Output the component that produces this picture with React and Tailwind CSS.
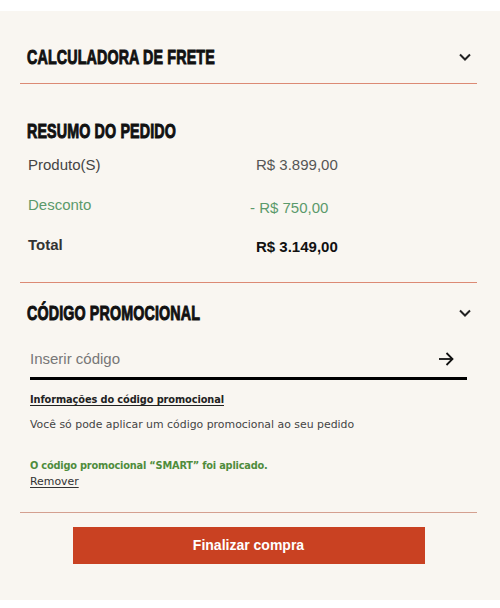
const heading = "inline-block origin-left scale-x-[0.68] font-['Liberation_Sans',Arial,sans-serif] font-bold text-[21px] leading-[21px] tracking-[0.2px] text-[#111] [-webkit-text-stroke:1px_#111]";

function Chevron() {
  return (
    <svg width="12" height="8" viewBox="0 0 12 8" fill="none" className="shrink-0">
      <polyline points="1,1.5 6,6.5 11,1.5" stroke="#222" strokeWidth="2" />
    </svg>
  );
}

function Arrow() {
  return (
    <svg width="16" height="14" viewBox="0 0 16 14" fill="none" className="shrink-0">
      <line x1="1" y1="7" x2="14.5" y2="7" stroke="#111" strokeWidth="1.8" />
      <polyline points="8.5,1 14.5,7 8.5,13" stroke="#111" strokeWidth="1.8" />
    </svg>
  );
}

const rows = [
  { label: "Produto(S)", value: "R$ 3.899,00", labelCls: "text-[#444]", valueCls: "text-[#555]" },
  { label: "Desconto", value: "- R$ 750,00", labelCls: "text-[#5b9a6b]", valueCls: "text-[#5b9a6b] -ml-[6px] mt-[3px]" },
  { label: "Total", value: "R$ 3.149,00", labelCls: "text-[#333] font-bold", valueCls: "text-[#111] font-bold mt-[2px]" },
];

export default function App() {
  return (
    <div className="bg-white min-h-[608px] pt-[11px] font-['Liberation_Sans',Arial,sans-serif]">
      <div className="bg-[#f9f6f1] h-[589px] pl-5 pr-[23px]">
        {/* calculadora */}
        <div className="pt-[35px] pb-[16px] border-b border-[#dc8a74] flex items-center justify-between pl-[7px] pr-[6px]">
          <span className={heading}>CALCULADORA DE FRETE</span>
          <Chevron />
        </div>

        {/* resumo */}
        <div className="pt-[36px] pb-[27px] border-b border-[#dc8a74] pl-[7px]">
          <div className="h-[21px]">
            <span className={heading}>RESUMO DO PEDIDO</span>
          </div>
          <div className="mt-[14px] flex flex-col gap-5">
            {rows.map((r) => (
              <div key={r.label} className="grid grid-cols-[229px_1fr] h-5 text-[15px] leading-5">
                <span className={"pl-[1px] " + r.labelCls}>{r.label}</span>
                <span className={r.valueCls}>{r.value}</span>
              </div>
            ))}
          </div>
        </div>

        {/* codigo */}
        <div className="pt-[19px] pb-[22px] border-b border-[#d4a090]">
          <div className="flex items-center justify-between pl-[7px] pr-[6px]">
            <span className={heading}>CÓDIGO PROMOCIONAL</span>
            <Chevron />
          </div>
          <div className="mt-[26px] mx-[10px] pb-[8px] pr-[13px] border-b-[3px] border-black flex items-center">
            <input
              placeholder="Inserir código"
              className="flex-1 h-5 leading-5 text-[15px] bg-transparent outline-none text-[#222] placeholder:text-[#777]"
            />
            <Arrow />
          </div>
          <div className="ml-[10px] font-['DejaVu_Sans',sans-serif] text-[10.9px] leading-4">
            <p className="mt-[12px] font-bold text-[9.8px] tracking-[-0.1px] text-[#222] underline underline-offset-2">Informações do código promocional</p>
            <p className="mt-[9px] text-[#444]">Você só pode aplicar um código promocional ao seu pedido</p>
            <p className="mt-[25px] font-bold text-[9.8px] tracking-[-0.2px] text-[#4f8c3c]">O código promocional “SMART” foi aplicado.</p>
            <p className="text-[#333] underline underline-offset-2">Remover</p>
          </div>
        </div>

        <button className="block mx-auto mt-[14px] w-[352px] h-[37px] bg-[#c94122] text-white text-[14px] font-bold">
          Finalizar compra
        </button>
      </div>
    </div>
  );
}
